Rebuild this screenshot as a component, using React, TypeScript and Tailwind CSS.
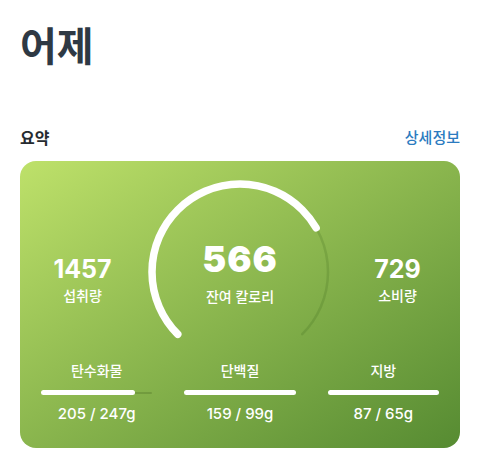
import React from "react";

const FONT = '"Inter", "Noto Sans CJK KR", sans-serif';

function Ring() {
  const d = "M 32.77 157.23 A 88 88 0 1 1 157.23 157.23";
  return (
    <svg width="190" height="190" viewBox="0 0 190 190" className="absolute left-0 top-0">
      <path d={d} fill="none" stroke="rgba(40,80,10,0.16)" strokeWidth="2.5" strokeLinecap="round" />
      <path
        d={d}
        fill="none"
        stroke="#ffffff"
        strokeWidth="7.5"
        strokeLinecap="round"
        pathLength={100}
        strokeDasharray="72.2 200"
      />
    </svg>
  );
}

function Macro({ label, value, pct }: { label: string; value: string; pct: number }) {
  return (
    <div className="flex flex-col items-center">
      <div className="text-[14px] leading-[20px] font-medium text-white">{label}</div>
      <div className="relative mt-[9px] h-[5px] w-full">
        <div className="absolute left-0 right-0 top-[1.5px] h-[2px] rounded-full bg-[rgba(40,70,10,0.2)]" />
        <div className="absolute left-0 top-0 h-[5px] rounded-full bg-white" style={{ width: `${pct}%` }} />
      </div>
      <div className="mt-[9px] text-[15px] leading-[20px] font-medium text-white">{value}</div>
    </div>
  );
}

export default function App() {
  return (
    <div className="w-[480px] h-[464px] bg-white px-5" style={{ fontFamily: FONT }}>
      <h1 className="pt-[23px] text-[40px] leading-[48px] font-bold text-[#2e3944]">어제</h1>
      <div className="mt-[55px] flex items-center justify-between">
        <div className="text-[16px] leading-[24px] font-bold text-[#262b30]">요약</div>
        <div className="text-[15px] leading-[24px] font-medium text-[#2b7bc0]">상세정보</div>
      </div>
      <div className="mt-[11px] h-[287px] rounded-[16px] bg-linear-to-br from-[#bee16a] to-[#568b32] pt-[16px]">
        <div className="grid h-[184px] grid-cols-[1fr_190px_1fr]">
          <div className="flex flex-col items-center pt-[77px]">
            <div className="text-[25px] leading-[30px] font-bold text-white">1457</div>
            <div className="mt-[2px] text-[14px] leading-[20px] font-medium text-white">섭취량</div>
          </div>
          <div className="relative flex flex-col items-center pt-[62px]">
            <Ring />
            <div className="relative text-[36px] leading-[40px] font-black tracking-[1px] text-white">566</div>
            <div className="relative mt-[8px] text-[14px] leading-[20px] font-medium text-white">잔여 칼로리</div>
          </div>
          <div className="flex flex-col items-center pt-[77px]">
            <div className="text-[25px] leading-[30px] font-bold text-white">729</div>
            <div className="mt-[2px] text-[14px] leading-[20px] font-medium text-white">소비량</div>
          </div>
        </div>
        <div className="grid grid-cols-3 gap-8 px-[21px]">
          <Macro label="탄수화물" value="205 / 247g" pct={84} />
          <Macro label="단백질" value="159 / 99g" pct={100} />
          <Macro label="지방" value="87 / 65g" pct={100} />
        </div>
      </div>
    </div>
  );
}
